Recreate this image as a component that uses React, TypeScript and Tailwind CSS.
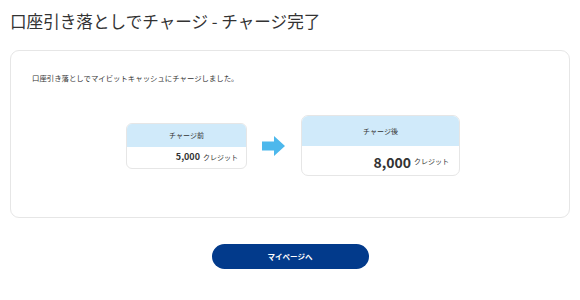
import React from "react";

const font = { fontFamily: '"Noto Sans CJK JP", "Noto Sans", sans-serif' };

function Arrow() {
  return (
    <svg width="23" height="20" viewBox="0 0 23 20" className="shrink-0">
      <path d="M0 5.5H12V0L23 10L12 20V14.5H0Z" fill="#4db8ec" />
    </svg>
  );
}

export default function App() {
  return (
    <div className="min-h-[300px] w-[580px] bg-white px-[10px] text-[#333]" style={font}>
      <h1 className="pt-[9px] text-[16.6px] font-normal leading-[24px]">
        口座引き落としでチャージ - チャージ完了
      </h1>

      <div className="mt-[17px] rounded-[9px] border border-[#e6e6e6] pb-[41px] pl-[21px] pr-[21px] pt-[22px]">
        <p className="text-[7.4px] leading-[10px] text-[#333]">
          口座引き落としでマイビットキャッシュにチャージしました。
        </p>

        <div className="mt-[32px] flex items-center justify-center gap-[15px] pl-[6px]">
          <div className="w-[121px] overflow-hidden rounded-[6px] border border-[#e6e6e6]">
            <div className="flex h-[23px] items-center justify-center bg-[#d0eafa] text-[7px]">
              チャージ前
            </div>
            <div className="flex h-[21px] items-center justify-end pr-[8px]">
              <span className="text-[9px] font-bold">5,000</span>
              <span className="ml-[3px] text-[7px]">クレジット</span>
            </div>
          </div>

          <Arrow />

          <div className="ml-[1px] w-[159px] overflow-hidden rounded-[7px] border border-[#e6e6e6]">
            <div className="flex h-[30px] items-center justify-center bg-[#d0eafa] text-[7px]">
              チャージ後
            </div>
            <div className="flex h-[29px] items-center justify-end pr-[10px] pt-[2px]">
              <span className="text-[14px] font-bold leading-none">8,000</span>
              <span className="ml-[3px] text-[7px]">クレジット</span>
            </div>
          </div>
        </div>
      </div>

      <div className="mt-[26px] flex justify-center">
        <button
          type="button"
          className="flex h-[25px] w-[157px] items-center justify-center rounded-full bg-[#023a8b] text-[7.5px] font-bold text-white"
        >
          マイページへ
        </button>
      </div>
    </div>
  );
}
